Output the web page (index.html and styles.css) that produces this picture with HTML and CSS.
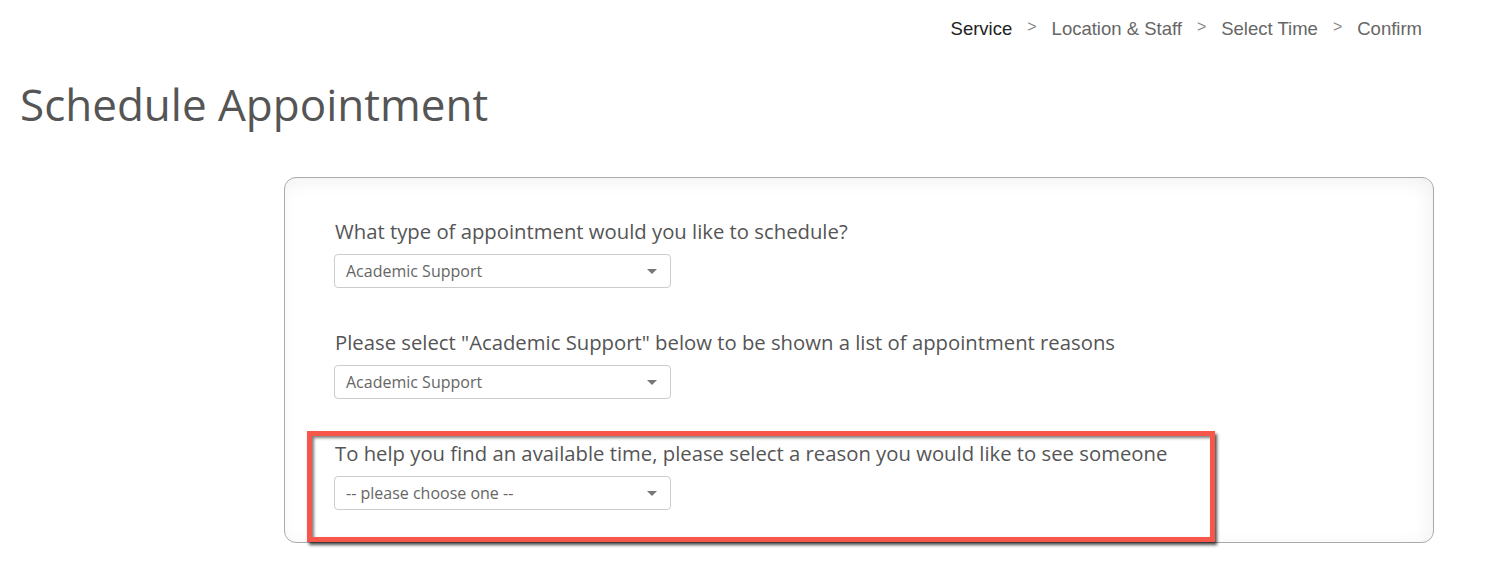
FILE: index.html
```html
<!DOCTYPE html>
<html>
<head>
<meta charset="utf-8">
<link rel="stylesheet" href="styles.css">
</head>
<body>
<nav class="crumbs">
  <span class="step active">Service</span>
  <span class="sep">&gt;</span>
  <span class="step">Location &amp; Staff</span>
  <span class="sep">&gt;</span>
  <span class="step">Select Time</span>
  <span class="sep">&gt;</span>
  <span class="step">Confirm</span>
</nav>
<h1 class="title">Schedule Appointment</h1>
<div class="card">
  <div class="group">
    <label class="label">What type of appointment would you like to schedule?</label>
    <div class="select"><span>Academic Support</span><i class="caret"></i></div>
  </div>
  <div class="group">
    <label class="label">Please select "Academic Support" below to be shown a list of appointment reasons</label>
    <div class="select"><span>Academic Support</span><i class="caret"></i></div>
  </div>
  <div class="group">
    <label class="label">To help you find an available time, please select a reason you would like to see someone</label>
    <div class="select"><span>-- please choose one --</span><i class="caret"></i></div>
  </div>
  <div class="highlight"></div>
</div>
</body>
</html>
```

FILE: styles.css
```css
html, body {
  margin: 0;
  padding: 0;
  background: #fff;
}
body {
  width: 1510px;
  height: 570px;
  overflow: hidden;
  font-family: "Open Sans", sans-serif;
}
.crumbs {
  display: flex;
  justify-content: flex-end;
  align-items: flex-start;
  gap: 15px;
  padding: 18px 88px 0 0;
  font-family: "Liberation Sans", Arial, sans-serif;
  font-size: 18.5px;
  line-height: 22px;
  color: #666;
}
.crumbs .active {
  color: #222;
}
.crumbs .sep {
  font-size: 16px;
  line-height: 17px;
  color: #888;
}
.title {
  margin: 0;
  padding: 34px 0 0 20px;
  font-weight: 400;
  font-size: 44px;
  line-height: 61px;
  color: #555;
}
.card {
  position: relative;
  box-sizing: border-box;
  margin: 42px 0 0 284px;
  width: 1150px;
  height: 366px;
  border: 1px solid #aaa;
  border-radius: 12px;
  box-shadow: inset -4px 4px 18px rgba(0,0,0,0.06);
  padding: 39px 0 0 49px;
}
.group {
  display: flex;
  flex-direction: column;
  align-items: flex-start;
  margin-bottom: 40px;
}
.label {
  font-size: 20.3px;
  line-height: 28px;
  color: #555;
  margin-bottom: 9px;
  padding-left: 1px;
}
.select {
  box-sizing: border-box;
  width: 337px;
  height: 34px;
  border: 1px solid #ccc;
  border-radius: 4px;
  display: flex;
  align-items: center;
  justify-content: space-between;
  padding: 0 13px 0 11px;
  font-size: 16px;
  color: #666;
}
.caret {
  width: 0;
  height: 0;
  border-left: 5px solid transparent;
  border-right: 5px solid transparent;
  border-top: 5px solid #777;
}
.highlight {
  position: absolute;
  left: 22px;
  top: 253px;
  width: 908px;
  height: 111px;
  box-sizing: border-box;
  border: 5px solid #f7564b;
  box-shadow: 2px 3px 3px rgba(0,0,0,0.7), inset 2px 2px 3px rgba(0,0,0,0.5);
}
```
